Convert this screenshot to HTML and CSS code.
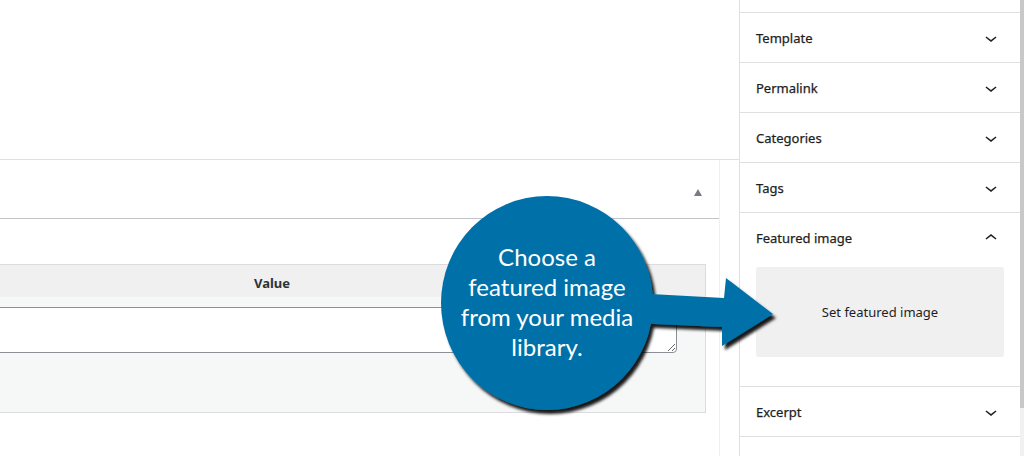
FILE: index.html
```html
<!DOCTYPE html>
<html lang="en">
<head>
    <meta charset="UTF-8">
    <meta name="viewport" content="width=device-width, initial-scale=1.0">
    <title>Edit Post</title>
    <link rel="stylesheet" href="styles.css">
</head>
<body>

    <div class="screen">
        <div class="main">
            <div class="main-top"></div>

            <div class="metabox">
                <div class="metabox-header">
                    <span class="toggle-arrow"></span>
                </div>
                <div class="metabox-inside">
                    <div class="meta-table">
                        <div class="meta-head">Value</div>
                        <div class="meta-body">
                            <textarea class="meta-value" rows="2"></textarea>
                        </div>
                    </div>
                </div>
            </div>
        </div>

        <div class="sidebar">
            <div class="panel-end"></div>

            <div class="panel">
                <span>Template</span>
                <svg class="chevron" viewBox="0 0 24 24"><path d="M17.5 11.6L12 16l-5.5-4.4.9-1.2L12 14l4.6-3.6.9 1.2z"/></svg>
            </div>
            <div class="panel">
                <span>Permalink</span>
                <svg class="chevron" viewBox="0 0 24 24"><path d="M17.5 11.6L12 16l-5.5-4.4.9-1.2L12 14l4.6-3.6.9 1.2z"/></svg>
            </div>
            <div class="panel">
                <span>Categories</span>
                <svg class="chevron" viewBox="0 0 24 24"><path d="M17.5 11.6L12 16l-5.5-4.4.9-1.2L12 14l4.6-3.6.9 1.2z"/></svg>
            </div>
            <div class="panel">
                <span>Tags</span>
                <svg class="chevron" viewBox="0 0 24 24"><path d="M17.5 11.6L12 16l-5.5-4.4.9-1.2L12 14l4.6-3.6.9 1.2z"/></svg>
            </div>

            <div class="panel-open">
                <div class="panel">
                    <span>Featured image</span>
                    <svg class="chevron" viewBox="0 0 24 24"><path d="M6.5 12.4L12 8l5.5 4.4-.9 1.2L12 10l-4.6 3.6-.9-1.2z"/></svg>
                </div>
                <div class="panel-body">
                    <button class="featured-btn" type="button">Set featured image</button>
                </div>
            </div>

            <div class="panel">
                <span>Excerpt</span>
                <svg class="chevron" viewBox="0 0 24 24"><path d="M17.5 11.6L12 16l-5.5-4.4.9-1.2L12 14l4.6-3.6.9 1.2z"/></svg>
            </div>
            <div class="panel"></div>
        </div>

        <div class="scrollbar">
            <div class="scroll-thumb"></div>
        </div>

        <!-- callout drawn over the page -->
        <div class="callout">
            <svg class="callout-shape" width="360" height="240" viewBox="0 0 360 240">
                <defs>
                    <filter id="shadow" x="-10%" y="-10%" width="130%" height="130%">
                        <feDropShadow dx="3" dy="4" stdDeviation="1.6" flood-color="#000" flood-opacity="0.9"/>
                    </filter>
                </defs>
                <g filter="url(#shadow)" fill="#0070a8">
                    <polygon points="196,103 288,108 290,88 337,124 286,156 286,137 196,133"/>
                    <ellipse cx="111" cy="113" rx="106" ry="107"/>
                </g>
            </svg>
            <div class="callout-text">Choose a<br>featured image<br>from your media<br>library.</div>
        </div>
    </div>

</body>
</html>
```

FILE: styles.css
```css
body {
    margin: 0;
    font-family: "Noto Sans", "Open Sans", sans-serif;
    background-color: #fff;
    color: #1e1e1e;
    overflow: hidden;
}

.screen {
    position: relative;
    display: flex;
    height: 456px;
    overflow: hidden;
}

/* main editor column */
.main {
    flex: 1;
    border-right: 1px solid #e0e0e0;
    overflow: hidden;
}

.main-top {
    height: 159px;
    border-bottom: 1px solid #e0e0e0;
}

.metabox {
    margin-right: 19px;
    border-right: 1px solid #f0f0f1;
    height: 296px;
}

.metabox-header {
    height: 59px;
    border-bottom: 1px solid #c3c4c7;
    display: flex;
    justify-content: flex-end;
    align-items: center;
    padding-right: 17px;
    padding-top: 7px;
    box-sizing: border-box;
}

.toggle-arrow {
    width: 0;
    height: 0;
    border-left: 4px solid transparent;
    border-right: 4px solid transparent;
    border-bottom: 7px solid #787c82;
}

.metabox-inside {
    padding: 45px 13px 0 0;
}

.meta-table {
    margin-left: -162px;
    border: 1px solid #dcdcde;
}

.meta-head {
    height: 32px;
    line-height: 32px;
    padding-top: 2px;
    box-sizing: border-box;
    background-color: #f0f0f0;
    text-align: center;
    font-size: 13px;
    font-weight: 700;
    color: #2c3338;
}

.meta-body {
    height: 115px;
    background-color: #f6f7f7;
    padding: 10px 28px 0 0;
    box-sizing: border-box;
}

.meta-value {
    display: block;
    width: 100%;
    height: 46px;
    box-sizing: border-box;
    border: 1px solid #8c8f94;
    border-radius: 4px;
    background-color: #fff;
    margin: 0;
}

/* settings sidebar */
.sidebar {
    width: 280px;
    flex-shrink: 0;
    font-size: 13px;
}

.panel-end {
    height: 12px;
    border-bottom: 1px solid #e0e0e0;
}

.panel {
    height: 49px;
    border-bottom: 1px solid #e0e0e0;
    display: flex;
    align-items: center;
    justify-content: space-between;
    padding: 0 17px 0 16px;
    font-weight: 400;
    -webkit-text-stroke: 0.25px #1e1e1e;
}

.chevron {
    width: 24px;
    height: 24px;
    fill: #1e1e1e;
}

.panel-open {
    border-bottom: 1px solid #e0e0e0;
}

.panel-open .panel {
    border-bottom: none;
}

.panel-body {
    padding: 5px 16px 29px;
}

.featured-btn {
    display: block;
    width: 100%;
    height: 90px;
    border: none;
    border-radius: 2px;
    background-color: #f0f0f0;
    font-family: inherit;
    font-size: 13px;
    color: #1e1e1e;
    padding: 0;
}

.scrollbar {
    width: 4px;
    flex-shrink: 0;
    background-color: #f1f1f1;
}

.scroll-thumb {
    height: 408px;
    background-color: #c8c8c8;
}

/* annotation bubble */
.callout {
    position: absolute;
    left: 436px;
    top: 190px;
    width: 360px;
    height: 240px;
}

.callout-shape {
    display: block;
}

.callout-text {
    position: absolute;
    left: 0;
    top: 52px;
    width: 222px;
    text-align: center;
    font-family: Lato, "Open Sans", sans-serif;
    font-size: 24px;
    line-height: 30px;
    color: #fff;
}
```
